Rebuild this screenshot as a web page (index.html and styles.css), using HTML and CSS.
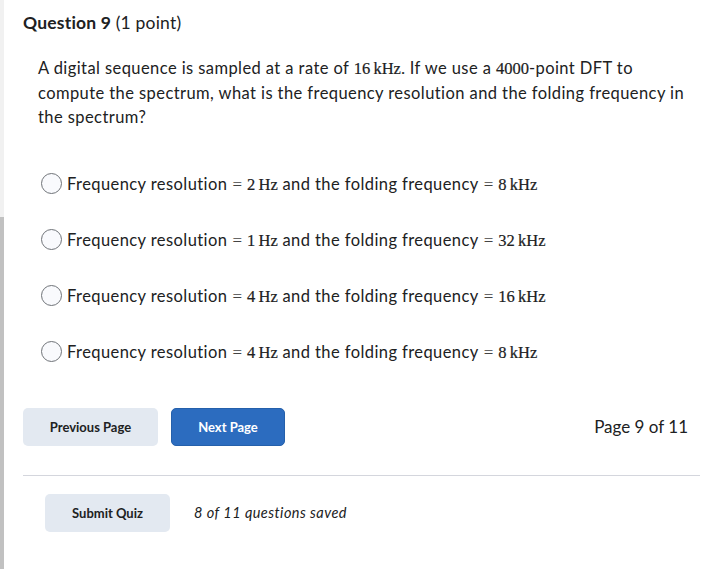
FILE: index.html
```html
<!DOCTYPE html>
<html>
<head>
<meta charset="utf-8">
<link rel="stylesheet" href="styles.css">
</head>
<body>
<div class="page">
  <div class="edge">
    <div class="edge-top"></div>
    <div class="edge-bottom"></div>
  </div>
  <main class="content">
    <h2 class="qtitle">Question 9 <span class="pts">(1 point)</span></h2>
    <p class="qtext">A digital sequence is sampled at a rate of <span class="m">16&#8201;kHz.</span> If we use a <span class="m">4000</span>-point DFT to compute the spectrum, what is the frequency resolution and the folding frequency in the spectrum?</p>
    <div class="options">
      <label class="opt"><span class="radio"></span><span>Frequency resolution<span class="eq">=</span><span class="m">2&#8201;Hz</span> and the folding frequency<span class="eq">=</span><span class="m">8&#8201;kHz</span></span></label>
      <label class="opt"><span class="radio"></span><span>Frequency resolution<span class="eq">=</span><span class="m">1&#8201;Hz</span> and the folding frequency<span class="eq">=</span><span class="m">32&#8201;kHz</span></span></label>
      <label class="opt"><span class="radio"></span><span>Frequency resolution<span class="eq">=</span><span class="m">4&#8201;Hz</span> and the folding frequency<span class="eq">=</span><span class="m">16&#8201;kHz</span></span></label>
      <label class="opt"><span class="radio"></span><span>Frequency resolution<span class="eq">=</span><span class="m">4&#8201;Hz</span> and the folding frequency<span class="eq">=</span><span class="m">8&#8201;kHz</span></span></label>
    </div>
    <div class="nav">
      <button class="btn btn-prev">Previous Page</button>
      <button class="btn btn-next">Next Page</button>
      <span class="pageno">Page 9 of 11</span>
    </div>
    <hr class="divider">
    <div class="submit-row">
      <button class="btn btn-submit">Submit Quiz</button>
      <span class="saved">8 of 11 questions saved</span>
    </div>
  </main>
</div>
</body>
</html>
```
FILE: styles.css
```css
* { box-sizing: border-box; }
html, body { margin: 0; padding: 0; background: #ffffff; }
body {
  font-family: Lato, "Noto Sans", sans-serif;
  color: #202122;
  width: 705px;
  height: 569px;
  overflow: hidden;
}
.page {
  display: flex;
  height: 569px;
}
.edge {
  width: 4px;
  display: flex;
  flex-direction: column;
  flex-shrink: 0;
}
.edge-top { height: 217px; background: #f1f1f1; }
.edge-bottom { flex: 1; background: #c1c1c1; }
.content {
  flex: 1;
  padding: 0 5px 0 19px;
}
.qtitle {
  margin: 12px 0 0 0;
  font-size: 17.5px;
  font-weight: 700;
  line-height: 22px;
  letter-spacing: 0.2px;
}
.qtitle .pts { font-weight: 400; }
.qtext {
  margin: 22px 0 0 15px;
  font-size: 16.5px;
  line-height: 24.5px;
  letter-spacing: 0.42px;
}
.m {
  font-family: "Liberation Serif", "Times New Roman", serif;
  font-size: 16.5px;
  line-height: 1;
  letter-spacing: 0;
  -webkit-text-stroke: 0.2px #202122;
}
.eq {
  font-family: "Liberation Serif", serif;
  font-size: 17px;
  line-height: 1;
  color: #444;
  margin: 0 5px;
  letter-spacing: 0;
}
.options {
  margin-top: 42px;
  display: flex;
  flex-direction: column;
  gap: 32px;
}
.opt {
  display: flex;
  align-items: center;
  gap: 5px;
  font-size: 16.5px;
  line-height: 24px;
  height: 24px;
  padding-left: 18px;
  letter-spacing: 0.42px;
}
.radio {
  width: 21px;
  height: 21px;
  border: 1.5px solid #6f7378;
  border-radius: 50%;
  background: #f9fafd;
  flex-shrink: 0;
}
.nav {
  display: flex;
  align-items: center;
  gap: 13px;
  margin-top: 44px;
}
.btn {
  font-family: Lato, sans-serif;
  font-weight: 700;
  font-size: 13px;
  height: 38px;
  border-radius: 5px;
  border: none;
  color: #202122;
  background: #e3e9f1;
  padding: 0;
}
.btn-prev { width: 135px; }
.btn-next { width: 114px; background: #2c6cbf; color: #ffffff; border: 1px solid #2560ab; }
.pageno {
  margin-left: auto;
  font-size: 17px;
  padding-right: 12px;
}
.divider {
  margin: 29px 0 0 0;
  border: none;
  border-top: 1.5px solid #d4d6dd;
}
.submit-row {
  display: flex;
  align-items: center;
  margin-top: 18px;
  padding-left: 22px;
  gap: 24px;
}
.btn-submit { width: 125px; }
.saved {
  font-style: italic;
  font-size: 14.5px;
  letter-spacing: 0.45px;
}
```
